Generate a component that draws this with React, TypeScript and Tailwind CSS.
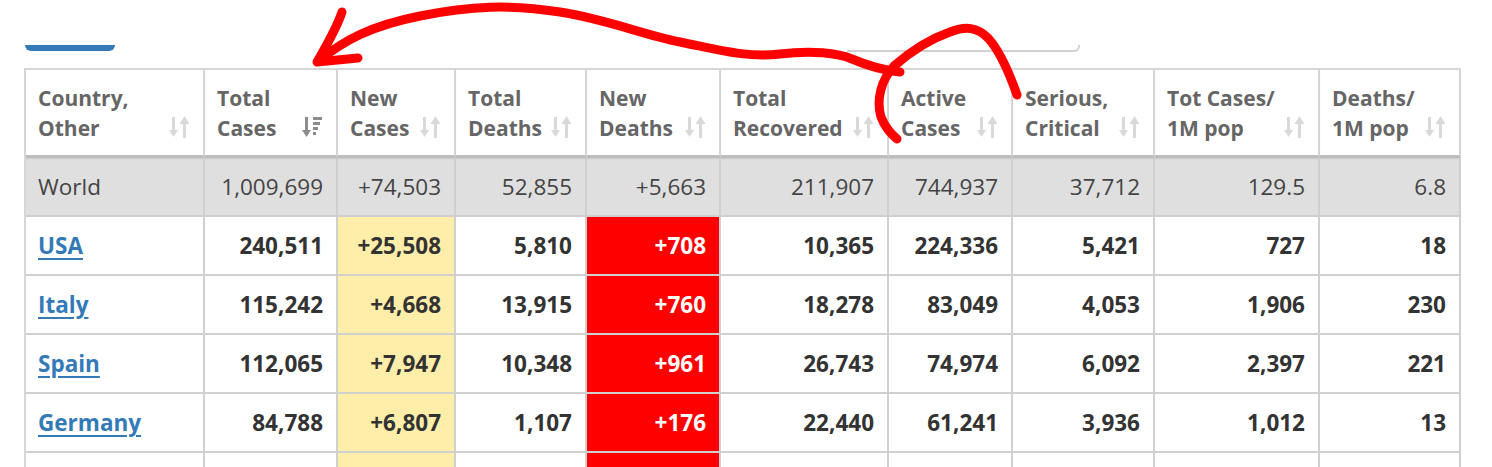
import React from "react";

type Row = { country: string; values: string[] };

const headers: string[][] = [
  ["Country,", "Other"],
  ["Total", "Cases"],
  ["New", "Cases"],
  ["Total", "Deaths"],
  ["New", "Deaths"],
  ["Total", "Recovered"],
  ["Active", "Cases"],
  ["Serious,", "Critical"],
  ["Tot Cases/", "1M pop"],
  ["Deaths/", "1M pop"],
];

const world: string[] = [
  "1,009,699",
  "+74,503",
  "52,855",
  "+5,663",
  "211,907",
  "744,937",
  "37,712",
  "129.5",
  "6.8",
];

const rows: Row[] = [
  { country: "USA", values: ["240,511", "+25,508", "5,810", "+708", "10,365", "224,336", "5,421", "727", "18"] },
  { country: "Italy", values: ["115,242", "+4,668", "13,915", "+760", "18,278", "83,049", "4,053", "1,906", "230"] },
  { country: "Spain", values: ["112,065", "+7,947", "10,348", "+961", "26,743", "74,974", "6,092", "2,397", "221"] },
  { country: "Germany", values: ["84,788", "+6,807", "1,107", "+176", "22,440", "61,241", "3,936", "1,012", "13"] },
];

const grid =
  "grid grid-cols-[179px_133px_118px_131px_134px_168px_124px_142px_165px_141px]";

function SortIcon({ active }: { active?: boolean }) {
  const c = active ? "#8c8c8c" : "#d9d9d9";
  return (
    <svg width="22" height="24" viewBox="0 0 22 24" className="shrink-0">
      {/* down arrow */}
      <rect x="3" y="2" width="3" height="14" fill={c} />
      <polygon points="0,15 9,15 4.5,22" fill={c} />
      {active ? (
        <>
          <rect x="11" y="2" width="9" height="3" fill={c} />
          <rect x="11" y="7" width="7" height="3" fill={c} />
          <rect x="11" y="12" width="5" height="3" fill={c} />
          <rect x="11" y="17" width="3" height="3" fill={c} />
        </>
      ) : (
        <>
          <polygon points="10.5,9 20.5,9 15.5,1" fill={c} />
          <rect x="14" y="8" width="3" height="15" fill={c} />
        </>
      )}
    </svg>
  );
}

function Scribble() {
  return (
    <svg
      className="pointer-events-none absolute left-0 top-0"
      width="1492"
      height="467"
      viewBox="0 0 1492 467"
      fill="none"
      stroke="#ff0000"
      strokeWidth="9"
      strokeLinecap="round"
      strokeLinejoin="round"
    >
      <path d="M900 72 C 882 70 866 65 852 59 S 812 50 780 54 S 720 50 680 42 S 610 20 560 12 S 470 6 420 16 S 345 40 318 61" />
      <path d="M342 12 C 336 30 326 46 317 62 L 358 58" />
      <path d="M1017 95 C 1010 75 1001 52 988 38 C 977 27 966 26 950 32 C 930 39 910 52 894 66 C 881 80 876 100 881 117 C 885 127 891 134 897 139" />
    </svg>
  );
}

export default function App() {
  return (
    <div className="relative h-[467px] w-[1492px] overflow-hidden bg-white font-['Open_Sans',sans-serif]">
      {/* top strip: tab marker and search box edge */}
      <div className="flex h-[68px] items-start">
        <div className="ml-[25px] mt-[45px] h-[6px] w-[90px] rounded-b-[6px] bg-[#337ab7]" />
        <div className="ml-[732px] mt-[45px] h-[7px] w-[233px] rounded-br-[6px] border-b-2 border-r-2 border-[#d0d0d0]" />
      </div>

      <div className="ml-[24px] w-[1437px] border-l-2 border-t-2 border-[#d6d6d6]">
        {/* header */}
        <div className={grid}>
          {headers.map((h, i) => (
            <div
              key={i}
              className="flex h-[88px] items-center border-b-[3px] border-r-2 border-b-[#bdbdbd] border-r-[#d6d6d6] px-[12px] shadow-[0_1px_1px_rgba(0,0,0,0.08)]"
            >
              <div className="flex w-full items-end justify-between">
                <div className="text-[21px] font-bold leading-[30px] text-[#666]">
                  {h[0]}
                  <br />
                  {h[1]}
                </div>
                <div className="mb-[4px]">
                  <SortIcon active={i === 1} />
                </div>
              </div>
            </div>
          ))}
        </div>

        {/* world row */}
        <div className={`${grid} bg-[#dfdfdf]`}>
          <div className="flex h-[59px] items-center border-b-2 border-r-2 border-[#cfcfcf] pl-[12px] text-[22.5px] text-[#444]">
            World
          </div>
          {world.map((v, i) => (
            <div
              key={i}
              className="flex h-[59px] items-center justify-end border-b-2 border-r-2 border-[#cfcfcf] pr-[13px] text-[22.5px] text-[#444]"
            >
              {v}
            </div>
          ))}
        </div>

        {/* country rows */}
        {rows.map((r) => (
          <div key={r.country} className={grid}>
            <div className="flex h-[59px] items-center border-b-2 border-r-2 border-[#d0d0d0] pl-[12px]">
              <a href="#" className="text-[22.5px] font-bold text-[#337ab7] underline decoration-2 underline-offset-[4px]">
                {r.country}
              </a>
            </div>
            {r.values.map((v, i) => (
              <div
                key={i}
                className={`flex h-[59px] items-center justify-end border-b-2 border-r-2 border-[#d0d0d0] pr-[13px] text-[22.5px] font-bold ${
                  i === 1
                    ? "bg-[#ffeeaa] text-[#333]"
                    : i === 3
                    ? "bg-[#ff0000] text-white"
                    : "text-[#333]"
                }`}
              >
                {v}
              </div>
            ))}
          </div>
        ))}

        {/* next row, cut off */}
        <div className={grid}>
          {Array.from({ length: 10 }).map((_, i) => (
            <div
              key={i}
              className={`h-[59px] border-r-2 border-[#d0d0d0] ${
                i === 2 ? "bg-[#ffeeaa]" : i === 4 ? "bg-[#ff0000]" : ""
              }`}
            />
          ))}
        </div>
      </div>

      <Scribble />
    </div>
  );
}
